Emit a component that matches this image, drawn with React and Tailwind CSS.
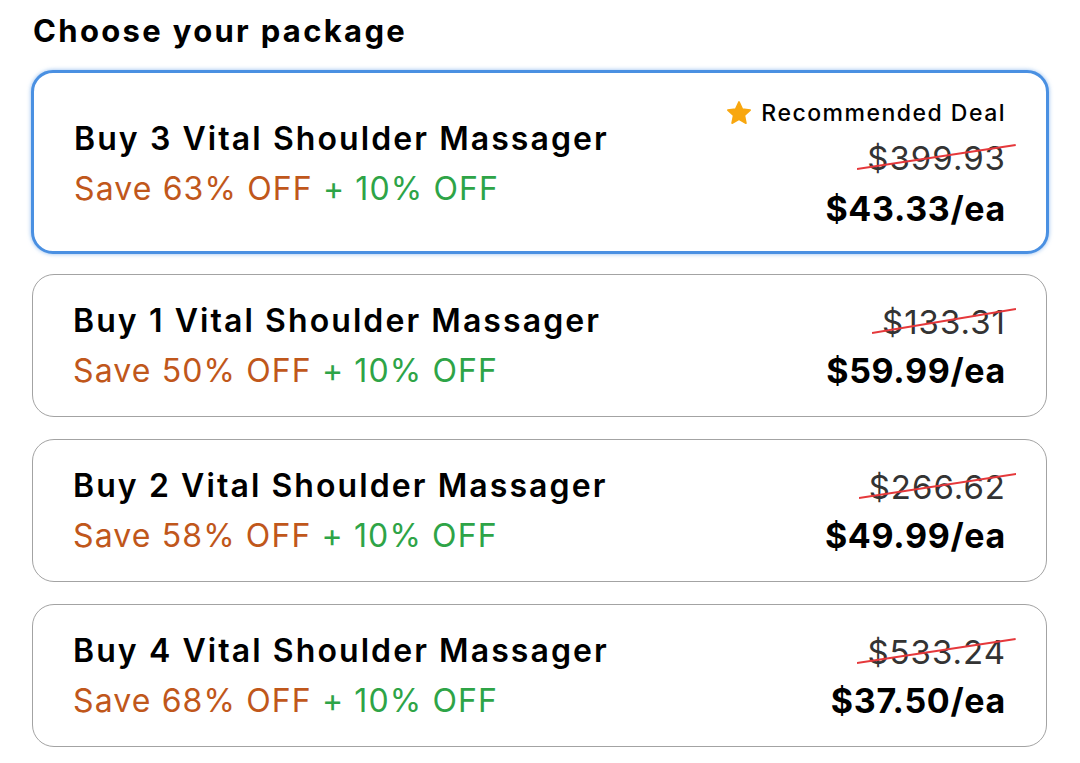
const PACKAGES = [
  { qty: 3, save: 63, was: "$399.93", price: "$43.33/ea", recommended: true },
  { qty: 1, save: 50, was: "$133.31", price: "$59.99/ea" },
  { qty: 2, save: 58, was: "$266.62", price: "$49.99/ea" },
  { qty: 4, save: 68, was: "$533.24", price: "$37.50/ea" },
];

function Star() {
  return (
    <svg viewBox="0 0 24 24" className="h-[26px] w-[26px]">
      <path
        d="M12 1.8l3.1 6.6 7.2.9-5.3 5 1.4 7.1L12 17.9l-6.4 3.5 1.4-7.1-5.3-5 7.2-.9z"
        fill="#f8a70f"
        stroke="#f8a70f"
        strokeWidth="1.5"
        strokeLinejoin="round"
      />
    </svg>
  );
}

// old price with the diagonal red line across it
function Struck({ children }) {
  return (
    <span className="relative inline-block text-[33px] leading-[50px] tracking-[0.03em] text-[#333]">
      {children}
      <svg
        className="absolute -left-[10px] -right-[10px] top-0 h-[50px] w-[calc(100%+20px)]"
        viewBox="0 0 100 50"
        preserveAspectRatio="none"
      >
        <line x1="0" y1="36" x2="100" y2="12" stroke="#e5383b" strokeWidth="2" vectorEffect="non-scaling-stroke" />
      </svg>
    </span>
  );
}

export default function App() {
  return (
    <div
      className="min-h-screen bg-white px-[31px] pt-[11px]"
      style={{ fontFamily: "Inter, 'Noto Sans', sans-serif" }}
    >
      <h2 className="ml-[2px] text-[31px] font-bold leading-[40px] tracking-[0.075em] text-black">
        Choose your package
      </h2>

      <div className="mt-[19px] flex w-[1018px] flex-col gap-[22px]">
        {PACKAGES.map((p) => (
          <div
            key={p.qty}
            className={`flex items-center justify-between rounded-[22px] bg-white pl-[40px] pr-[40px] ${
              p.recommended
                ? "-mb-[2px] border-[3px] border-[#4a90e2] pb-[16px] pt-[20px] shadow-[0_0_4px_rgba(74,144,226,0.6)]"
                : "ml-[1px] w-[1015px] border-[1.5px] border-[#a3a3a3] pb-[20px] pt-[21px]"
            }`}
          >
            <div className="flex flex-col">
              <span className="text-[32px] font-semibold leading-[50px] tracking-[0.065em] text-black">
                Buy {p.qty} Vital Shoulder Massager
              </span>
              <span className="text-[32px] leading-[50px] tracking-[0.035em]">
                <span className="text-[#c0571b]">Save {p.save}% OFF </span>
                <span className="text-[#2ea447]">+ 10% OFF</span>
              </span>
            </div>
            <div className="flex flex-col items-end">
              {p.recommended && (
                <div className="flex items-center gap-[9px] text-[23px] font-medium leading-[40px] tracking-[0.065em] text-black">
                  <Star />
                  Recommended Deal
                </div>
              )}
              <Struck>{p.was}</Struck>
              <span
                className={`text-[34px] font-bold tracking-[0.02em] text-black ${
                  p.recommended ? "leading-[52px]" : "leading-[48px]"
                }`}
              >
                {p.price}
              </span>
            </div>
          </div>
        ))}
      </div>
    </div>
  );
}
